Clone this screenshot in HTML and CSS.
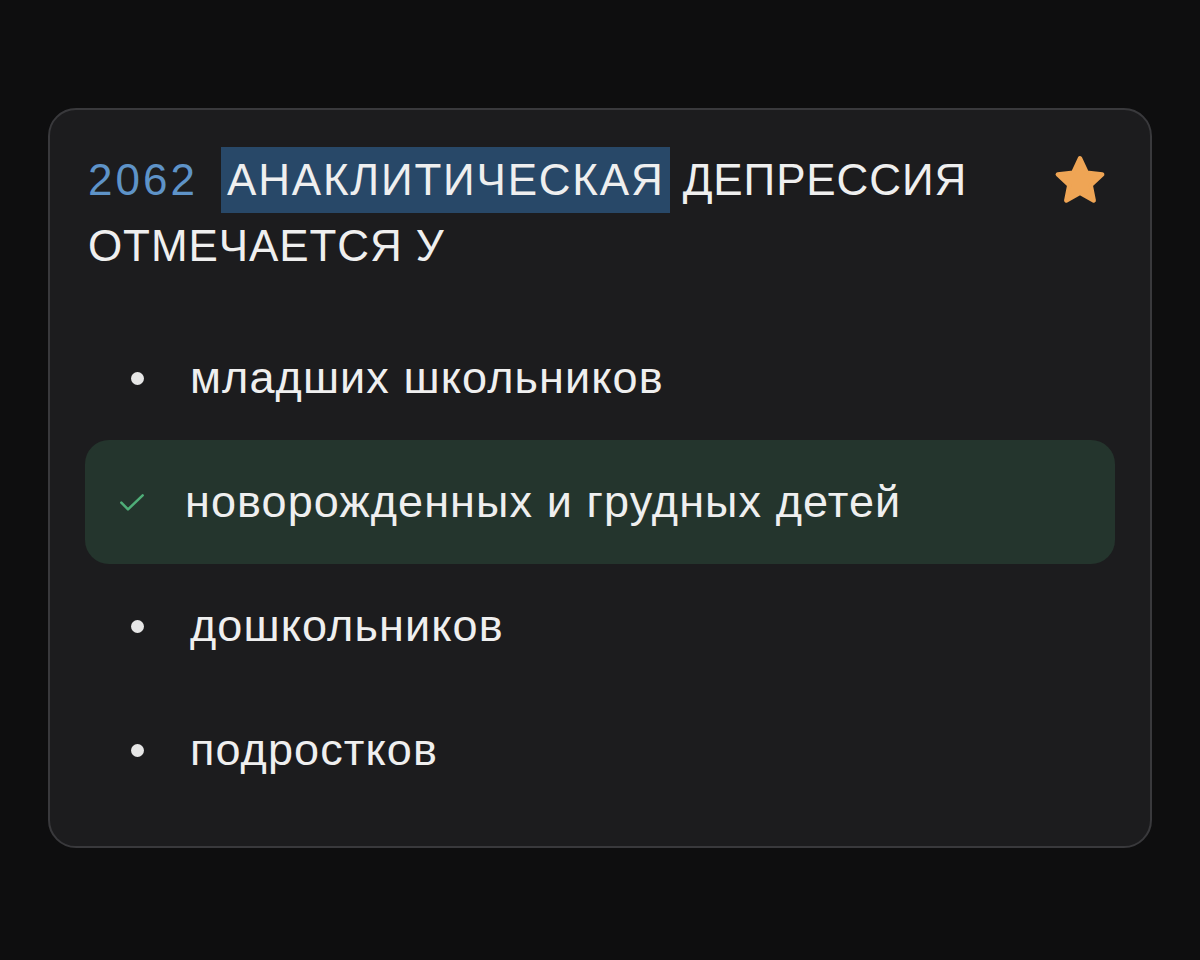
FILE: index.html
```html
<!DOCTYPE html>
<html lang="ru">
<head>
<meta charset="utf-8">
<link rel="stylesheet" href="styles.css">
</head>
<body>
<div class="card">
  <div class="head">
    <div class="title"><span class="num">2062</span> <span class="sel">АНАКЛИТИЧЕСКАЯ</span> ДЕПРЕССИЯ ОТМЕЧАЕТСЯ У</div>
    <svg class="star" viewBox="0 0 24 24" width="58" height="58"><path d="M12 2.6l2.75 5.9 6.45.78-4.76 4.43 1.25 6.37L12 16.9l-5.69 3.18 1.25-6.37L2.8 9.28l6.45-.78z" fill="#efa555" stroke="#efa555" stroke-width="1.8" stroke-linejoin="round"/></svg>
  </div>
  <ul class="opts">
    <li class="opt"><span class="mark"><span class="dot"></span></span><span class="txt">младших школьников</span></li>
    <li class="opt ok"><span class="mark"><svg viewBox="0 0 24 24" width="32" height="32"><path d="M4 12.5l5 5L20 7" fill="none" stroke="#4fae78" stroke-width="1.9" stroke-linecap="round" stroke-linejoin="round"/></svg></span><span class="txt">новорожденных и грудных детей</span></li>
    <li class="opt"><span class="mark"><span class="dot"></span></span><span class="txt">дошкольников</span></li>
    <li class="opt"><span class="mark"><span class="dot"></span></span><span class="txt">подростков</span></li>
  </ul>
</div>
</body>
</html>
```
FILE: styles.css
```css
html, body { margin: 0; padding: 0; }
body {
  background: #0e0e0f;
  width: 1200px;
  height: 960px;
  font-family: "Liberation Sans", Arial, sans-serif;
  color: #efefef;
  padding-top: 108px;
  box-sizing: border-box;
}
.card {
  margin-left: 48px;
  width: 1104px;
  height: 740px;
  box-sizing: border-box;
  background: #1c1c1e;
  border: 2px solid #39393c;
  border-radius: 28px;
  padding: 37px 35px 0 35px;
}
.head {
  display: flex;
  justify-content: space-between;
  align-items: flex-start;
  padding: 0 6px 0 3px;
}
.title {
  font-size: 44px;
  line-height: 66px;
  width: 920px;
  letter-spacing: 0.9px;
}
.num { color: #5e93c8; letter-spacing: 3px; margin-right: 10px; }
.sel {
  display: inline-block;
  background: #284868;
  padding: 0 5px 0 6px;
  line-height: 66px;
  letter-spacing: 1.8px;
}
.star { margin-top: 5px; }
.opts {
  list-style: none;
  margin: 37px 0 0 0;
  padding: 0;
}
.opt {
  height: 124px;
  display: flex;
  align-items: center;
  font-size: 45px;
  border-radius: 24px;
}
.opt.ok { background: #24352d; }
.mark {
  width: 105px;
  display: flex;
  align-items: center;
  justify-content: center;
  flex: none;
}
.dot {
  width: 13px; height: 13px; border-radius: 50%;
  background: #e6e6e6;
}
.ok .mark { width: 100px; justify-content: flex-start; padding-left: 31px; box-sizing: border-box; }
.txt { letter-spacing: 1.1px; }
```
